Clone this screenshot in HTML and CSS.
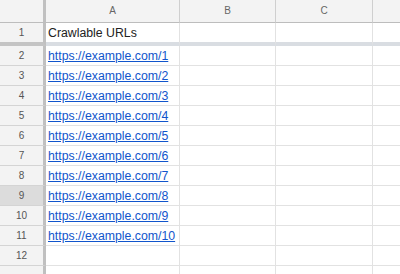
FILE: index.html
```html
<!DOCTYPE html>
<html lang="en">

<head>
    <meta charset="UTF-8">
    <meta name="viewport" content="width=device-width, initial-scale=1.0">
    <title>Crawlable URLs</title>
    <link rel="stylesheet" href="styles.css">
</head>

<body>
    <div class="sheet">
        <div class="row head">
            <div class="num corner"></div>
            <div class="cell col-a">A</div>
            <div class="cell col-b">B</div>
            <div class="cell col-c">C</div>
            <div class="cell col-d"></div>
        </div>
        <div class="row frozen">
            <div class="num">1</div>
            <div class="cell col-a">Crawlable URLs</div>
            <div class="cell col-b"></div>
            <div class="cell col-c"></div>
            <div class="cell col-d"></div>
        </div>
        <div class="row">
            <div class="num">2</div>
            <div class="cell col-a"><a href="#">https://example.com/1</a></div>
            <div class="cell col-b"></div>
            <div class="cell col-c"></div>
            <div class="cell col-d"></div>
        </div>
        <div class="row">
            <div class="num">3</div>
            <div class="cell col-a"><a href="#">https://example.com/2</a></div>
            <div class="cell col-b"></div>
            <div class="cell col-c"></div>
            <div class="cell col-d"></div>
        </div>
        <div class="row">
            <div class="num">4</div>
            <div class="cell col-a"><a href="#">https://example.com/3</a></div>
            <div class="cell col-b"></div>
            <div class="cell col-c"></div>
            <div class="cell col-d"></div>
        </div>
        <div class="row">
            <div class="num">5</div>
            <div class="cell col-a"><a href="#">https://example.com/4</a></div>
            <div class="cell col-b"></div>
            <div class="cell col-c"></div>
            <div class="cell col-d"></div>
        </div>
        <div class="row">
            <div class="num">6</div>
            <div class="cell col-a"><a href="#">https://example.com/5</a></div>
            <div class="cell col-b"></div>
            <div class="cell col-c"></div>
            <div class="cell col-d"></div>
        </div>
        <div class="row">
            <div class="num">7</div>
            <div class="cell col-a"><a href="#">https://example.com/6</a></div>
            <div class="cell col-b"></div>
            <div class="cell col-c"></div>
            <div class="cell col-d"></div>
        </div>
        <div class="row">
            <div class="num">8</div>
            <div class="cell col-a"><a href="#">https://example.com/7</a></div>
            <div class="cell col-b"></div>
            <div class="cell col-c"></div>
            <div class="cell col-d"></div>
        </div>
        <div class="row">
            <div class="num hover">9</div>
            <div class="cell col-a"><a href="#">https://example.com/8</a></div>
            <div class="cell col-b"></div>
            <div class="cell col-c"></div>
            <div class="cell col-d"></div>
        </div>
        <div class="row">
            <div class="num">10</div>
            <div class="cell col-a"><a href="#">https://example.com/9</a></div>
            <div class="cell col-b"></div>
            <div class="cell col-c"></div>
            <div class="cell col-d"></div>
        </div>
        <div class="row">
            <div class="num">11</div>
            <div class="cell col-a"><a href="#">https://example.com/10</a></div>
            <div class="cell col-b"></div>
            <div class="cell col-c"></div>
            <div class="cell col-d"></div>
        </div>
        <div class="row">
            <div class="num">12</div>
            <div class="cell col-a"></div>
            <div class="cell col-b"></div>
            <div class="cell col-c"></div>
            <div class="cell col-d"></div>
        </div>
        <div class="row">
            <div class="num"></div>
            <div class="cell col-a"></div>
            <div class="cell col-b"></div>
            <div class="cell col-c"></div>
            <div class="cell col-d"></div>
        </div>
    </div>
</body>

</html>
```

FILE: styles.css
```css
body {
    margin: 0;
    padding: 0;
    width: 400px;
    height: 274px;
    overflow: hidden;
    background: #fff;
    font-family: Arial, "Liberation Sans", sans-serif;
}

.sheet {
    display: flex;
    flex-direction: column;
}

.row {
    display: flex;
    height: 20px;
    flex-shrink: 0;
}

.num,
.cell {
    box-sizing: border-box;
    height: 100%;
    border-right: 1px solid #e2e2e2;
    border-bottom: 1px solid #e2e2e2;
}

.num {
    width: 46px;
    border-right: 3px solid #c0c0c0;
    border-bottom-color: #d4d4d4;
    background: #f3f3f3;
    color: #555;
    font-size: 10px;
    text-align: center;
    line-height: 20px;
}

.num.hover {
    background: #dcdcdc;
}

.cell {
    padding: 1px 0 0 2px;
    font-size: 12.3px;
    line-height: 18px;
    color: #222;
    white-space: nowrap;
    overflow: hidden;
}

.col-a {
    width: 134px;
}

.col-b {
    width: 96px;
}

.col-c {
    width: 97px;
}

.col-d {
    flex: 1;
    border-right: none;
}

.head {
    height: 23px;
}

.head .num,
.head .cell {
    background: #f3f3f3;
    border-bottom: 1px solid #bdbdbd;
    border-right-color: #cfcfcf;
    color: #666;
    font-size: 10px;
    text-align: center;
    line-height: 22px;
    padding: 0;
}

.head .corner {
    border-right: 3px solid #c0c0c0;
}

.frozen {
    height: 23px;
}

.frozen .num,
.frozen .cell {
    border-bottom: 4px solid #d9dde2;
}

.frozen .num {
    border-bottom-color: #c4c4c4;
    line-height: 19px;
}

a {
    color: #1155cc;
    text-decoration: underline;
}
```
